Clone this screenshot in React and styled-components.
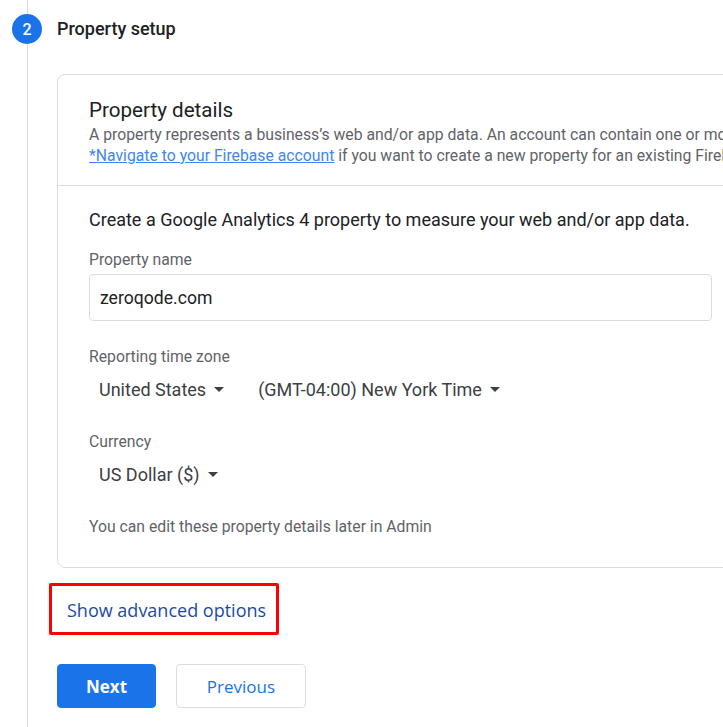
import React from 'react';
import styled, { createGlobalStyle } from 'styled-components';

const GlobalStyle = createGlobalStyle`
    html, body {
        margin: 0;
        padding: 0;
        background: #fff;
        overflow: hidden;
    }
    body {
        font-family: Roboto, "Liberation Sans", Arial, sans-serif;
        color: #202124;
    }
`

const Step = styled.div`
    display: grid;
    grid-template-columns: 57px 1fr;
    min-height: 727px;
`

const Rail = styled.div`
    display: flex;
    flex-direction: column;
    align-items: center;
    width: 30px;
    margin-left: 12px;
`

const RailLine = styled.div`
    width: 1px;
    height: ${(props) => props.$h || 'auto'};
    flex: ${(props) => (props.$grow ? 1 : 'none')};
    background: #dadce0;
`

const StepBadge = styled.div`
    width: 30px;
    height: 30px;
    border-radius: 50%;
    background: #1a73e8;
    color: #fff;
    font-size: 16px;
    font-weight: 500;
    display: flex;
    align-items: center;
    justify-content: center;
`

const Content = styled.div`
    display: flex;
    flex-direction: column;
    align-items: flex-start;
`

const StepTitle = styled.h2`
    margin: 0;
    height: 57px;
    display: flex;
    align-items: center;
    font-size: 18px;
    font-weight: 500;
    color: #202124;
`

const Card = styled.section`
    margin-top: 17px;
    width: 685px;
    flex: none;
    border: 1px solid #dadce0;
    border-radius: 8px;
`

const CardHeader = styled.div`
    padding: 21px 31px 19px;
    border-bottom: 1px solid #dadce0;
    white-space: nowrap;
`

const CardTitle = styled.h3`
    margin: 0;
    font-size: 20.6px;
    font-weight: 400;
    line-height: 28px;
    color: #202124;
`

const Desc = styled.p`
    margin: 0;
    font-size: 15.75px;
    line-height: 21px;
    color: #5f6368;
`

const Link = styled.a`
    color: #4285f4;
    text-decoration: underline;
`

const CardBody = styled.div`
    padding: 22px 31px 30px;
`

const Lead = styled.p`
    margin: 0;
    font-size: 18px;
    line-height: 24px;
    color: #202124;
`

const Label = styled.div`
    margin-top: ${(props) => props.$mt}px;
    font-size: 15.75px;
    line-height: 20px;
    color: #5f6368;
`

const Input = styled.div`
    margin-top: 4px;
    height: 45px;
    border: 1px solid #dadce0;
    border-radius: 4px;
    padding: 0 10px;
    display: flex;
    align-items: center;
    font-size: 17.6px;
    color: #202124;
`

const SelectRow = styled.div`
    margin-top: 4px;
    display: flex;
    gap: 14px;
`

const Select = styled.button`
    height: 36px;
    padding: 0 10px;
    border: none;
    background: none;
    display: flex;
    align-items: center;
    gap: 8px;
    font-family: inherit;
    font-size: 18px;
    color: #3c4043;
    cursor: pointer;
`

const Caret = styled.span`
    width: 0;
    height: 0;
    border-left: 5px solid transparent;
    border-right: 5px solid transparent;
    border-top: 5px solid #3c4043;
`

const Note = styled.p`
    margin: 25px 0 0;
    font-size: 15.75px;
    line-height: 20px;
    color: #5f6368;
`

const Highlight = styled.div`
    margin: 15px 0 0 -8px;
    border: 3px solid #f00;
    border-radius: 2px;
    padding: 2px 10px 0 15px;
    height: 44px;
    display: flex;
    align-items: center;
`

const TextButton = styled.button`
    border: none;
    background: none;
    padding: 0;
    font-family: "Open Sans", Roboto, sans-serif;
    font-size: 18px;
    font-weight: 500;
    color: #1a4aa8;
    cursor: pointer;
`

const Actions = styled.div`
    margin-top: 29px;
    display: flex;
    gap: 20px;
`

const Button = styled.button`
    height: 44px;
    width: ${(props) => props.$w}px;
    border-radius: 4px;
    border: 1px solid ${(props) => (props.$primary ? '#1a73e8' : '#dadce0')};
    background: ${(props) => (props.$primary ? '#1a73e8' : '#fff')};
    color: ${(props) => (props.$primary ? '#fff' : '#1a73e8')};
    font-family: "Open Sans", Roboto, sans-serif;
    font-size: 17px;
    font-weight: ${(props) => (props.$primary ? 700 : 500)};
    cursor: pointer;
`

const App = () => {
    return (
        <>
            <GlobalStyle />
            <Step>
                <Rail>
                    <RailLine $h="14px" />
                    <StepBadge>2</StepBadge>
                    <RailLine $grow />
                </Rail>
                <Content>
                    <StepTitle>Property setup</StepTitle>
                    <Card>
                        <CardHeader>
                            <CardTitle>Property details</CardTitle>
                            <Desc>A property represents a business’s web and/or app data. An account can contain one or more properties.</Desc>
                            <Desc>
                                <Link>*Navigate to your Firebase account</Link> if you want to create a new property for an existing Firebase project.
                            </Desc>
                        </CardHeader>
                        <CardBody>
                            <Lead>Create a Google Analytics 4 property to measure your web and/or app data.</Lead>
                            <Label $mt={18}>Property name</Label>
                            <Input>zeroqode.com</Input>
                            <Label $mt={26}>Reporting time zone</Label>
                            <SelectRow>
                                <Select>United States <Caret /></Select>
                                <Select>(GMT-04:00) New York Time <Caret /></Select>
                            </SelectRow>
                            <Label $mt={25}>Currency</Label>
                            <SelectRow>
                                <Select>US Dollar ($) <Caret /></Select>
                            </SelectRow>
                            <Note>You can edit these property details later in Admin</Note>
                        </CardBody>
                    </Card>
                    <Highlight>
                        <TextButton>Show advanced options</TextButton>
                    </Highlight>
                    <Actions>
                        <Button $primary $w={99}>Next</Button>
                        <Button $w={130}>Previous</Button>
                    </Actions>
                </Content>
            </Step>
        </>
    );
};

export default App;
